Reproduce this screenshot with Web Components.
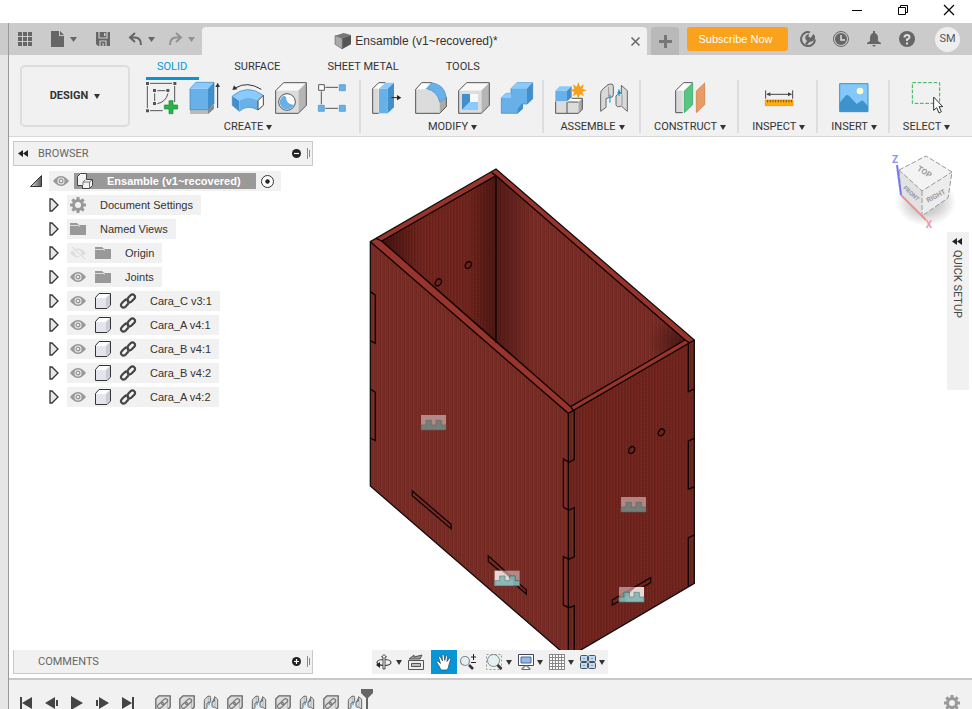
<!DOCTYPE html>
<html lang="en">
<head>
<meta charset="utf-8">
<meta name="viewport" content="width=device-width, initial-scale=1">
<title>Ensamble</title>
<style>
    html, body{
        height: 100%;
        margin: 0;
    }

    body{
        --ui: Roboto, sans-serif;
        --doc: "Liberation Sans", Arial, sans-serif;
        --panel: #f1f1f1;
        --line: #c8c8c8;
        --accent: #0696d7;
        background: #fff;
        color: #333;
        font: 11px/16px var(--ui);
        overflow: hidden;
    }
</style>
</head>
<body>
<cad-app></cad-app>

<script>
const cube = `
    <path d="M2 26 26 2H94L70 26z" fill="#f8f8f8"/>
    <path d="M70 26 94 2V70L70 94z" fill="#b5b5b5"/>
    <path d="M2 26H70V94H2z" fill="#dcdcdc"/>
    <path d="M2 26 26 2H94V70L70 94H2z" fill="none" stroke="#555" stroke-width="3" stroke-linejoin="round"/>`;

const gearTeeth = (n, cx, cy, r, w) => Array.from({ length: n }, (_, i) =>
    `<rect x="${cx - w / 2}" y="${cy - r}" width="${w}" height="${r}" transform="rotate(${i * 360 / n} ${cx} ${cy})"/>`
).join('');

const joint = (stroke) => `
    <g fill="#d9d9d9" stroke="#666" stroke-width="${stroke}" stroke-linejoin="round">
        <path d="M8 88V34Q8 26 16 20L30 8Q46 2 46 14V38Q46 48 34 46L24 50V76z"/>
        <path d="M54 42Q66 28 70 36V10L88 26V88L70 72Q56 78 54 68z"/>
    </g>
    <path d="M32 14V44M72 38V70" stroke="#999" stroke-width="3"/>
    <path d="M36 38V62M63 22V42" stroke="#0696d7" stroke-width="${stroke}"/>
    <path d="M57 34H69L63 24z" fill="#0696d7"/>`;

// name: [width, height, viewBox, markup]
const icons = {
    caret: [7, 5, '0 0 7 5', '<path d="M0 0H7L3.5 5z" fill="currentColor"/>'],
    tick: [6, 5, '0 0 6 5', '<path d="M0 0H6L3 5z" fill="currentColor"/>'],
    minimize: [10, 10, '0 0 10 10', '<path d="M0 5.5H10" stroke="#000"/>'],
    restore: [10, 10, '0 0 10 10', '<path d="M.5 2.5H7.5V9.5H.5zM2.5 2V.5H9.5V7.5H8" fill="none" stroke="#000"/>'],
    close: [10, 10, '0 0 10 10', '<path d="M0 0 10 10M10 0 0 10" stroke="currentColor" stroke-width="1.2"/>'],
    dismiss: [9, 9, '0 0 9 9', '<path d="M.5 .5 8.5 8.5M8.5 .5 .5 8.5" stroke="currentColor" stroke-width="1.5"/>'],
    apps: [14, 14, '0 0 14 14', '<path d="M0 0h4v4H0zM5 0h4v4H5zM10 0h4v4h-4zM0 5h4v4H0zM5 5h4v4H5zM10 5h4v4h-4zM0 10h4v4H0zM5 10h4v4H5zM10 10h4v4h-4z" fill="currentColor"/>'],
    file: [13, 16, '0 0 13 16', '<path d="M0 0H8V5H13V16H0zM9 0 13 4H9z" fill="currentColor"/>'],
    save: [14, 14, '0 0 14 14', '<path d="M0 0H14V14H2L0 12z" fill="currentColor"/><path d="M3 0V6H11V0M4 14V9H10V14M7 11V14" fill="none" stroke="#cbcbcb" stroke-width="1.2"/><path d="M8 1h1.5v3H8z" fill="#cbcbcb"/>'],
    undo: [13, 12, '0 0 13 12', '<path d="M6 0 1 4.5 6 9M1 4.5H6Q12 4.5 12 12" fill="none" stroke="currentColor" stroke-width="2"/>'],
    redo: [13, 12, '0 0 13 12', '<path d="M7 0 12 4.5 7 9M12 4.5H7Q1 4.5 1 12" fill="none" stroke="currentColor" stroke-width="2"/>'],
    doc: [16, 16, '0 0 48 48', '<path d="M0 8 26 0 48 6 22 16z" fill="#777"/><path d="M0 8 22 16V48L0 34z" fill="#aaa" stroke="#666" stroke-width="2"/><path d="M22 16 48 6V34L22 48z" fill="#555"/>'],
    plus: [13, 13, '0 0 13 13', '<path d="M6.5 0V13M0 6.5H13" stroke="#777" stroke-width="3"/>'],
    extensions: [16, 16, '0 0 16 16', '<path d="M10 1.4A7 7 0 1 0 15 8.5" fill="none" stroke="currentColor" stroke-width="2"/><path d="M5 13 7 10Q4 7 6 4.5L9 2.5 8.5 5.5 10.5 7 13.5 3 15 5Q15.5 9 12 10.5L9.5 11 7 14z" fill="currentColor"/>'],
    clock: [16, 16, '0 0 16 16', '<circle cx="8" cy="8" r="7.500" fill="none" stroke="currentColor"/><circle cx="8" cy="8" r="6" fill="currentColor"/><path d="M8 4V9H12" fill="none" stroke="#ddd" stroke-width="1.5"/>'],
    bell: [16, 16, '0 0 16 16', '<path d="M7 0H9V2Q12 3 12 7V10L15 12V13H1V12L4 10V7Q4 3 7 2zM6 14H10L8 16z" fill="currentColor"/>'],
    help: [16, 16, '0 0 16 16', '<circle cx="8" cy="8" r="8" fill="currentColor"/><path d="M5.5 6.5Q5.5 4 8 4T10.5 6.2Q10.500 7.500 8 8.5V10" fill="none" stroke="#ddd" stroke-width="2"/><path d="M7 11.5h2v2H7z" fill="#ddd"/>'],

    sketch: [32, 32, '0 0 96 96', `
        <path d="M12 4H78M4 12V78M86 12V60M12 86H50M34 26H58M26 34V57M66 34Q60 60 34 65" fill="none" stroke="#555" stroke-width="3"/>
        <path d="M0 0h9v9H0zM82 0h9v9H82zM0 82h9v9H0zM21 21h9v9H21zM61 21h9v9H61zM21 60h9v9H21z" fill="#555"/>
        <path d="M69 56H81V69H95V81H81V95H69V81H55V69H69z" fill="#2bb24c" stroke="#168c36" stroke-width="2"/>`],
    extrude: [32, 32, '0 0 96 96', `
        <path d="M3 80H57L75 68V80L57 96H3z" fill="#bbb"/>
        <path d="M57 84 75 68V80L57 96z" fill="#888"/>
        <path d="M3 20H57V83H3z" fill="#68b1e8"/><path d="M3 20 21 1H75L57 20z" fill="#8acbff"/><path d="M57 20 75 1V65L57 83z" fill="#438fcb"/>
        <path d="M3 20 21 1H75V65L57 83H3z" fill="none" stroke="#3e83b7" stroke-width="2"/>
        <path d="M86 14V78" stroke="#333" stroke-width="3"/><path d="M79 15H93L86 2z" fill="#333"/>`],
    revolve: [32, 32, '0 0 96 96', `
        <path d="M1 42 22 56V88L1 70z" fill="#438fcb"/>
        <path d="M1 42Q46 4 94 40L78 56Q46 38 22 56z" fill="#8acbff"/>
        <path d="M22 56Q46 38 78 56V84Q46 66 22 88z" fill="#68b1e8"/>
        <path d="M1 42Q46 4 94 40M1 42V70L22 88Q46 66 78 84" fill="none" stroke="#3e83b7" stroke-width="2"/>
        <path d="M78 56 94 40V70L78 84z" fill="#fff" stroke="#444" stroke-width="3"/>
        <path d="M10 18Q46-4 88 22" fill="none" stroke="#333" stroke-width="3"/><path d="M1 24 6 10 16 22z" fill="#333"/>`],
    hole: [32, 32, '0 0 96 96', cube + `
        <circle cx="36" cy="60" r="25" fill="#fff" stroke="#555" stroke-width="3"/>
        <path d="M26 41A22 22 0 1 0 57 68Q35 66 34 50Q34 42 26 41z" fill="#68b1e8"/>`],
    pattern: [32, 32, '0 0 96 96', `
        <path d="M22 16H60M22 79H60M10 28V67" stroke="#555" stroke-width="3"/>
        <path d="M2 8h17v17H2z" fill="#fff" stroke="#555" stroke-width="3"/>
        <path d="M64 8h18v18H64zM1 70h18v18H1zM64 70h18v18H64z" fill="#68b1e8" stroke="#438fcb" stroke-width="2"/>`],
    press: [32, 32, '0 0 96 96', `
        <path d="M2 20 20 2H66V20L40 94H2z" fill="#fafafa"/>
        <path d="M2 20H20V94H2z" fill="#d9d9d9"/><path d="M40 2H20L2 20V94H20" fill="none" stroke="#555" stroke-width="3"/>
        <path d="M21 20H47V94H21z" fill="#68b1e8"/><path d="M21 20 40 2H66L47 20z" fill="#8acbff"/><path d="M47 20 66 2V76L47 94z" fill="#438fcb"/>
        <path d="M58 47H78" stroke="#222" stroke-width="3"/><path d="M75 39V55L88 47z" fill="#222"/>`],
    fillet: [32, 32, '0 0 96 96', `
        <path d="M2 22 20 2H50L30 22z" fill="#fff"/>
        <path d="M2 22H32Q66 24 74 60V94H2z" fill="#dcdcdc"/>
        <path d="M74 60 94 48V74L74 94z" fill="#aaa"/>
        <path d="M50 2H20L2 22V94H74L94 74V46" fill="none" stroke="#555" stroke-width="3"/>
        <path d="M34 20 50 2Q90 8 94 48L74 60Q68 28 34 20z" fill="#68b1e8" stroke="#438fcb" stroke-width="2"/>`],
    shell: [32, 32, '0 0 96 96', cube + `
        <path d="M12 36H60V84H12z" fill="#f8f8f8"/>
        <path d="M12 36H36V60L12 84z" fill="#438fcb"/><path d="M36 60H60V84H12z" fill="#8acbff"/>`],
    combine: [32, 32, '0 0 96 96', `
        <path d="M1 48 15 34H30V20L48 2H95V50L79 66H64V80L50 94H1z" fill="#68b1e8" stroke="#3e83b7" stroke-width="2"/>
        <path d="M1 48 15 34H30V48zM30 20 48 2H95L78 20z" fill="#8acbff"/>
        <path d="M78 20 95 2V50L78 66zM62 66H66V80L50 94V80z" fill="#438fcb"/>`],
    component: [32, 32, '0 0 96 96', `
        <path d="M36 60 48 49H82L70 60z" fill="#fff"/><path d="M70 60 82 49V82L70 94z" fill="#aaa"/>
        <path d="M2 60H70V94H2z" fill="#dcdcdc"/>
        <path d="M2 58V94H70L82 82V49H50M36 60V94M38 60H70" fill="none" stroke="#555" stroke-width="3"/>
        <path d="M1 26H36V58H1z" fill="#68b1e8"/><path d="M1 26 14 13H50L36 26z" fill="#8acbff"/><path d="M36 26 50 13V46L36 58z" fill="#438fcb"/>
        <path d="M70 0 75 14 87 7 82 20 95 25 82 30 87 43 75 37 70 50 65 37 53 43 58 30 45 25 58 20 53 7 65 14z" fill="#f7a11a"/>`],
    joint: [32, 32, '0 0 96 96', joint(3)],
    construct: [32, 32, '0 0 96 96', `
        <path d="M5 26 29 2H56L30 26z" fill="#fff"/><path d="M5 26H26V92H5z" fill="#d9d9d9"/>
        <path d="M56 2H29L5 26V92H26" fill="none" stroke="#555" stroke-width="3"/>
        <path d="M31 27 56 3V68L31 92z" fill="#58c583" stroke="#249f55" stroke-width="2"/>
        <path d="M67 27 92 3V68L67 92z" fill="#e99b66" stroke="#c9733b" stroke-width="2"/>`],
    measure: [32, 32, '0 0 96 96', `
        <path d="M8 25V50M89 25V50M12 37H85" stroke="#444" stroke-width="3"/>
        <path d="M10 37 22 31V43zM87 37 75 31V43z" fill="#444"/>
        <path d="M7 54H90V71H7z" fill="#ffab12" stroke="#e29000" stroke-width="2"/>
        <path d="M14 54V61M22 54V61M30 54V61M38 54V61M46 54V61M54 54V61M62 54V61M70 54V61M78 54V61M85 54V61" stroke="#755000" stroke-width="3"/>`],
    picture: [32, 32, '0 0 96 96', `
        <path d="M5 5H90V89H5z" fill="#82c8fb"/><path d="M5 62 24 40Q28 38 33 41L56 66 70 56Q74 55 78 59L90 73V89H5z" fill="#3e93cc"/>
        <circle cx="66" cy="27" r="10" fill="#fffcd0"/><path d="M5 5H90V89H5z" fill="none" stroke="#3e93cc" stroke-width="3"/>`],
    select: [32, 32, '0 0 96 96', `
        <path d="M4 2H86V64H4z" fill="none" stroke="#29b555" stroke-width="3" stroke-dasharray="11 5"/>
        <path d="M68 45V85L77 77 84 93 91 89 84 74H95z" fill="#fff" stroke="#333" stroke-width="3"/>`],

    rewind: [10, 7, '0 0 10 7', '<path d="M5 0V7L0 3.5zM10 0V7L5 3.5z" fill="#222"/>'],
    collapse: [9, 9, '0 0 9 9', '<circle cx="4.5" cy="4.5" r="4.5" fill="#222"/><path d="M2 4.5H7" stroke="#fff" stroke-width="1.2"/>'],
    expand: [9, 9, '0 0 9 9', '<circle cx="4.5" cy="4.5" r="4.5" fill="#222"/><path d="M2 4.5H7M4.5 2V7" stroke="#fff" stroke-width="1.2"/>'],
    grip: [3, 11, '0 0 3 11', '<path d="M.5 0V11M2.5 2V9" stroke="#888"/>'],
    open: [12, 12, '0 0 12 12', '<defs><linearGradient id="o"><stop stop-color="#ddd"/><stop offset="1" stop-color="#555"/></linearGradient></defs><path d="M11.500 .5V11.5H.5z" fill="url(#o)" stroke="#333"/>'],
    closed: [10, 14, '0 0 10 14', '<path d="M1 1H3L9 7 3 13H1z" fill="#e8e8e8" stroke="#333" stroke-width="1.3"/>'],
    eye: [16, 16, '0 0 16 16', '<path d="M0 8Q8-2 16 8Q8 18 0 8z" fill="#999"/><circle cx="8" cy="8" r="3.500" fill="#f1f1f1"/><circle cx="8" cy="8" r="2.500" fill="#999"/><path d="M7 7h2v2H7z" fill="#eee"/>'],
    hidden: [16, 16, '0 0 16 16', '<path d="M0 8Q8-1 16 8Q8 17 0 8z" fill="#ddd"/><circle cx="8" cy="8" r="3" fill="#f1f1f1"/><path d="M1 2 14 14" stroke="#f1f1f1" stroke-width="3"/><path d="M2 2 15 14" stroke="#d5d5d5"/>'],
    gear: [16, 16, '0 0 16 16', `<g fill="#999">${gearTeeth(8, 8, 8, 8, 3)}<circle cx="8" cy="8" r="6"/></g><circle cx="8" cy="8" r="3" fill="#f1f1f1"/>`],
    folder: [16, 16, '0 0 16 16', '<path d="M0 2H7L9 4H16V14H0z" fill="#999"/><path d="M0 4.5H8L10 5.5" fill="none" stroke="#ddd"/>'],
    body: [16, 16, '0 0 16 16', '<path d="M.5 4.5 4.5 .5H15.5V11.5L11.5 15.5H.5z" fill="#fff"/><path d="M1 5H11V15H1z" fill="#e4e5ec"/><path d="M11 5 15 1V11L11 15z" fill="#c9ccd6"/><path d="M.5 4.5 4 .5H15.5V12L12 15.5H.5z" fill="none" stroke="#333"/>'],
    assembly: [16, 16, '0 0 16 16', '<path d="M.5 3.5 3.5 .5H9.5V6.5H15.5V12.5L12.5 15.5H5.5V12.5H.5z" fill="#f3f3f6" stroke="#444"/><path d="M6 12V9L8.500 6.5M6 9H12.5V15M12.5 9 15 7" fill="none" stroke="#777"/>'],
    link: [16, 16, '0 0 16 16', '<g fill="none" stroke="#444" stroke-width="2.2" stroke-linecap="round"><path d="M8 5 10.5 2.3Q12.5 .5 14.3 2.2T13.8 6.2L11.5 8.5Q9.5 10.3 7.8 8.8"/><path d="M8 11 5.5 13.7Q3.5 15.5 1.7 13.8T2.2 9.8L4.5 7.5Q6.5 5.7 8.2 7.2"/></g>'],
    target: [13, 13, '0 0 13 13', '<circle cx="6.5" cy="6.5" r="6" fill="#fff" stroke="#333"/><circle cx="6.5" cy="6.5" r="2.2" fill="#222"/>'],

    orbit: [16, 16, '0 0 16 16', '<ellipse cx="8" cy="8.5" rx="7" ry="3" fill="none" stroke="#444" stroke-width="1.2"/><path d="M7 15V3H5.5L8 .5 10.5 3H9V15z" fill="#fff" stroke="#444"/><path d="M4 8V14L0 11z" fill="#222"/>'],
    look: [16, 16, '0 0 16 16', '<path d="M1 5 6 1V3L14 1 12 5z" fill="#999" stroke="#555"/><path d="M.5 6.5H15.5V15.5H.5z" fill="#eee" stroke="#555"/><path d="M3.5 9.5H12.5V12.5H3.5z" fill="#b8c0d0" stroke="#555"/>'],
    pan: [16, 16, '0 0 16 16', '<path d="M5 16Q4 13 1 9 0 7 2 7L4.5 9.5 2.5 3Q3 1.5 4.5 3L6.5 7 6 1Q7-.5 8 1L8.8 6.5 10 1.5Q11 .5 11.5 2L11 7.5 13.5 4Q15 3.5 14.8 5L13 10.5Q12.5 14 11 16z" fill="#fff" stroke="#234" stroke-width=".6"/>'],
    zoom: [16, 16, '0 0 16 16', '<circle cx="5" cy="7" r="4.5" fill="#e4f1f3" stroke="#888" stroke-width="1.2"/><path d="M9 11 13 15" stroke="#333" stroke-width="2.5"/><path d="M13.5 0V6M11 3H16M11 8.5H16" stroke="#222"/>'],
    fit: [16, 16, '0 0 16 16', '<path d="M.5 .5H15.5V15.5H.5z" fill="none" stroke="#999" stroke-dasharray="2 2"/><circle cx="7.5" cy="6.5" r="6" fill="#e4f1f3" stroke="#888"/><path d="M11.5 11 15.5 15" stroke="#333" stroke-width="2.5"/>'],
    display: [16, 16, '0 0 16 16', '<path d="M.5 .5H15.5V11.5H.5z" fill="#fff" stroke="#445"/><path d="M3 3H13V9H3z" fill="#98b8e4" stroke="#456ba4"/><path d="M6 12H10V14H12V15.5H4V14H6z" fill="#fff" stroke="#667"/>'],
    grid: [16, 16, '0 0 16 16', '<path d="M.5 .5H15.5V15.5H.5z" fill="#fff"/><path d="M.5 0V16M3.5 0V16M6.5 0V16M9.5 0V16M12.5 0V16M15.5 0V16M0 .5H16M0 3.5H16M0 6.5H16M0 9.5H16M0 12.5H16M0 15.5H16" stroke="#888"/>'],
    views: [16, 14, '0 0 16 14', '<g fill="#c4d8f0" stroke="#456"><rect x=".5" y=".5" width="7" height="6" rx="1"/><rect x="8.5" y=".5" width="7" height="6" rx="1"/><rect x=".5" y="7.5" width="7" height="6" rx="1"/><rect x="8.5" y="7.5" width="7" height="6" rx="1"/></g><path d="M3 3H5V4H3zM11 3H13V4H11zM3 10H5V11H3zM11 10H13V11H11z" fill="#7ba0d0"/>'],

    first: [12, 12, '0 0 12 12', '<path d="M0 0H2V12H0zM12 0V12L2 6z" fill="#444"/>'],
    prev: [13, 12, '0 0 13 12', '<path d="M10 0V12L0 6zM11 3H13V9H11z" fill="#444"/>'],
    play: [12, 14, '0 0 12 14', '<path d="M0 0V14L12 7z" fill="#444"/>'],
    next: [13, 12, '0 0 13 12', '<path d="M3 0V12L13 6zM0 3H2V9H0z" fill="#444"/>'],
    last: [12, 12, '0 0 12 12', '<path d="M10 0H12V12H10zM0 0V12L10 6z" fill="#444"/>'],
    insert: [16, 16, '0 0 16 16', '<path d="M.8 4 4 .8H15.2V12L12 15.2H.8z" fill="#dcdcdc" stroke="#666" stroke-width="1.3"/><path d="M12.500 4V14" stroke="#bbb"/><g fill="none" stroke="#777" stroke-width="1.2"><rect x="2" y="8" width="7" height="4" rx="2" transform="rotate(-40 6 10)"/><rect x="6" y="5" width="7" height="4" rx="2" transform="rotate(-40 9 7)"/></g>'],
    link2: [16, 16, '0 0 96 96', joint(6)],
    marker: [12, 24, '0 0 12 24', '<path d="M0 0H12V4L7 9V24H5V9L0 4z" fill="#666"/>']
};

function component(tag, css, html = '', setup){
    let template = document.createElement('template');
    template.innerHTML = `<style>${css}</style>${html}`;

    customElements.define(tag, class extends HTMLElement{
        constructor(){
            super();
            this.attachShadow({ mode: 'open' });
            this.shadowRoot.append(template.content.cloneNode(true));
        };

        connectedCallback(){
            if(setup) setup(this, this.shadowRoot);
        };
    });
};

// shared reset for native buttons inside the shadow roots
const buttonReset = `
    button{
        display: flex;
        align-items: center;
        justify-content: center;
        margin: 0;
        padding: 0;
        border: 0;
        background: none;
        color: inherit;
        font: inherit;
        white-space: nowrap;
    }`;

component('ui-icon', `
    :host{ display: inline-flex; flex: none; }
    svg{ display: block; overflow: visible; }
`, '', (el, root) => {
    let [w, h, box, markup] = icons[el.getAttribute('name')];
    root.innerHTML += `<svg width="${w}" height="${h}" viewBox="${box}" aria-hidden="true">${markup}</svg>`;
});

component('window-controls', `
    :host{
        display: flex;
        justify-content: flex-end;
        height: 23px;
        background: #fff;
        color: #000;
    }
    ${buttonReset}
    button{ width: 46px; height: 20px; }
`, `
    <button aria-label="Minimize"><ui-icon name="minimize"></ui-icon></button>
    <button aria-label="Restore"><ui-icon name="restore"></ui-icon></button>
    <button aria-label="Close"><ui-icon name="close"></ui-icon></button>
`);

component('app-bar', `
    :host{
        display: flex;
        align-items: center;
        height: 32px;
        padding: 0 12px 0 9px;
        background: #cbcbcb;
        color: #666;
        font-family: var(--doc);
    }
    ${buttonReset}
    .quick{ display: flex; gap: 19px; margin-right: 14px; }
    .drop{ gap: 6px; }
    .faded{ color: #929292; margin-right: 7px; }
    .tab{
        display: flex;
        flex: 1;
        align-self: flex-end;
        align-items: center;
        height: 28px;
        padding: 0 7px 0 0;
        border-radius: 4px 4px 0 0;
        background: var(--panel);
    }
    .title{
        display: flex;
        flex: 1;
        align-items: center;
        justify-content: center;
        gap: 4px;
        color: #333;
        font-size: 12px;
        white-space: nowrap;
    }
    .new{
        align-self: flex-end;
        width: 28px;
        height: 28px;
        margin: 0 8px 0 4px;
        border-radius: 4px 4px 0 0;
        background: #b9b9b9;
    }
    .subscribe{
        width: 101px;
        height: 24px;
        padding-right: 4px;
        border-radius: 3px;
        background: #faa21b;
        color: #fff;
    }
    .status{ display: flex; gap: 17px; margin: 0 20px 0 12px; }
    .avatar{
        width: 25px;
        height: 25px;
        border-radius: 50%;
        background: #eee;
        color: #555;
        font-family: var(--ui);
    }
`, `
    <div class="quick">
        <button aria-label="Data panel"><ui-icon name="apps"></ui-icon></button>
        <button class="drop" aria-label="File"><ui-icon name="file"></ui-icon><ui-icon name="caret"></ui-icon></button>
        <button aria-label="Save"><ui-icon name="save"></ui-icon></button>
        <button class="drop" aria-label="Undo"><ui-icon name="undo"></ui-icon><ui-icon name="caret"></ui-icon></button>
    </div>
    <button class="drop faded" aria-label="Redo"><ui-icon name="redo"></ui-icon><ui-icon name="caret"></ui-icon></button>
    <div class="tab">
        <div class="title"><ui-icon name="doc"></ui-icon><slot></slot></div>
        <button aria-label="Close document"><ui-icon name="dismiss"></ui-icon></button>
    </div>
    <button class="new" aria-label="New design"><ui-icon name="plus"></ui-icon></button>
    <button class="subscribe">Subscribe Now</button>
    <div class="status">
        <button aria-label="Extensions"><ui-icon name="extensions"></ui-icon></button>
        <button aria-label="Job status"><ui-icon name="clock"></ui-icon></button>
        <button aria-label="Notifications"><ui-icon name="bell"></ui-icon></button>
        <button aria-label="Help"><ui-icon name="help"></ui-icon></button>
    </div>
    <button class="avatar">SM</button>
`);

component('tool-group', `
    :host{
        display: flex;
        flex-direction: column;
        align-items: center;
        gap: 5px;
        padding: 2px 11px 0 13px;
        border-right: 2px solid #ddd;
    }
    :host([wide]){ padding: 2px 9px 0 11px; }
    :host(:first-child){ padding-left: 0; }
    :host(:last-child){ border: 0; }
    ${buttonReset}
    .tools{ display: flex; gap: 11px; }
    .label{ gap: 3px; height: 16px; }
`, `
    <div class="tools"></div>
    <button class="label"><slot></slot><ui-icon name="tick"></ui-icon></button>
`, (el, root) => {
    root.querySelector('.tools').innerHTML = el.getAttribute('tools').split(' ').map(name =>
        `<button aria-label="${name}"><ui-icon name="${name}"></ui-icon></button>`
    ).join('');
});

component('tool-ribbon', `
    :host{
        display: flex;
        gap: 16px;
        height: 81px;
        padding-left: 11px;
        border-bottom: 1px solid #d8d8d8;
        background: var(--panel);
        overflow: hidden;
    }
    ${buttonReset}
    .workspace{
        flex: none;
        gap: 6px;
        width: 110px;
        height: 62px;
        margin-top: 10px;
        border: 2px solid #ddd;
        border-radius: 5px;
        font-weight: 700;
    }
    .tabs{ display: flex; gap: 24px; height: 25px; }
    .tabs button{
        height: 25px;
        padding: 2px 12px 0 11px;
        box-sizing: border-box;
        border-bottom: 3px solid transparent;
    }
    .tabs .active{ border-color: var(--accent); color: var(--accent); }
    .groups{ display: flex; height: 53px; }
`, `
    <button class="workspace">DESIGN <ui-icon name="tick"></ui-icon></button>
    <div>
        <nav class="tabs">
            <button class="active">SOLID</button>
            <button>SURFACE</button>
            <button>SHEET METAL</button>
            <button>TOOLS</button>
        </nav>
        <div class="groups">
            <tool-group wide tools="sketch extrude revolve hole pattern">CREATE</tool-group>
            <tool-group wide tools="press fillet shell combine">MODIFY</tool-group>
            <tool-group wide tools="component joint">ASSEMBLE</tool-group>
            <tool-group tools="construct">CONSTRUCT</tool-group>
            <tool-group tools="measure">INSPECT</tool-group>
            <tool-group tools="picture">INSERT</tool-group>
            <tool-group tools="select">SELECT</tool-group>
        </div>
    </div>
`);

component('dock-panel', `
    :host{
        display: flex;
        align-items: center;
        gap: 6px;
        box-sizing: border-box;
        width: 300px;
        height: 25px;
        padding: 0 2px 0 4px;
        border: 1px solid var(--line);
        background: var(--panel);
        color: #666;
    }
    :host([docked]){ height: 24px; border-top: 0; }
    .lead{ width: 10px; display: flex; }
    .name{ flex: 1; padding-left: 4px; }
    ${buttonReset}
`, `
    <span class="lead"><slot name="lead"></slot></span>
    <span class="name"><slot></slot></span>
    <button aria-label="Toggle panel"><slot name="toggle"></slot></button>
    <ui-icon name="grip"></ui-icon>
`);

component('tree-item', `
    :host{
        display: flex;
        align-items: center;
        gap: 8px;
        height: 24px;
        padding-left: 36px;
        font-family: var(--doc);
    }
    :host([root]){ gap: 7px; padding-left: 17px; }
    .chip{
        display: flex;
        align-items: center;
        height: 20px;
        padding: 0 8px 0 3px;
        background: var(--panel);
        white-space: nowrap;
    }
    .text{ padding-left: 5px; }
    :host([root]) .chip{ gap: 5px; padding: 0 7px 0 4px; }
    .node{ display: flex; align-items: center; gap: 9px; }
    :host([root]) .node{
        height: 16px;
        padding: 0 15px 0 3px;
        background: #999;
        color: #fff;
        font-weight: 700;
    }
    ${buttonReset}
`, `
    <button aria-label="Expand"></button>
    <div class="chip"></div>
`, (el, root) => {
    let isRoot = el.hasAttribute('root');
    let list = el.getAttribute('icons').split(' ').map(name => `<ui-icon name="${name}"></ui-icon>`);
    let eye = isRoot ? list.shift() : '';
    root.querySelector('button').innerHTML = `<ui-icon name="${isRoot ? 'open' : 'closed'}"></ui-icon>`;
    root.querySelector('.chip').innerHTML =
        `${eye}<div class="node">${list.join('')}<span class="text"><slot></slot></span></div>` +
        (isRoot ? '<ui-icon name="target"></ui-icon>' : '');
});

component('browser-tree', `
    :host{ display: block; }
    div{ padding-top: 3px; }
`, `
    <dock-panel>BROWSER<ui-icon slot="lead" name="rewind"></ui-icon><ui-icon slot="toggle" name="collapse"></ui-icon></dock-panel>
    <div>
        <tree-item root icons="eye assembly">Ensamble (v1~recovered)</tree-item>
        <tree-item icons="gear">Document Settings</tree-item>
        <tree-item icons="folder">Named Views</tree-item>
        <tree-item icons="hidden folder">Origin</tree-item>
        <tree-item icons="eye folder">Joints</tree-item>
        <tree-item icons="eye body link">Cara_C v3:1</tree-item>
        <tree-item icons="eye body link">Cara_A v4:1</tree-item>
        <tree-item icons="eye body link">Cara_B v4:1</tree-item>
        <tree-item icons="eye body link">Cara_B v4:2</tree-item>
        <tree-item icons="eye body link">Cara_A v4:2</tree-item>
    </div>
`);

// joint glyph pinned on the model; bright covers the part that is not occluded
const pin = (x, y, bright = '') => `
    <g transform="translate(${x} ${y})">
        <path d="M0 0H75V45H0z" fill="#d9c4c2" opacity=".62"/>
        <path d="M0 30H15V16H31V30H45V16H61V30H75V45H0z" fill="#6f7d78" stroke="#5b6562" stroke-width="2" opacity=".9"/>
        ${bright && `<path d="${bright}" fill="#f4eceb" opacity=".8"/>
        <path d="M0 30H15V16H31V30H45V16H61V30H75V45H0z" fill="#7fb5b3" stroke="#45706e" stroke-width="2" opacity=".85"/>`}
    </g>`;

component('box-model', `
    :host{ display: block; }
    svg{ display: block; }
`, `
    <svg width="340" height="490" viewBox="0 0 1020 1470" role="img" aria-label="Box">
        <defs>
            <pattern id="weave" width="12" height="6" patternUnits="userSpaceOnUse">
                <path d="M1.5 0V6M7.5 0V3M10.5 3V6" stroke="#3b0d0a" stroke-width="3" opacity=".16"/>
                <path d="M4.5 0V3" stroke="#a8443c" stroke-width="3" opacity=".16"/>
            </pattern>
            <pattern id="cross" width="9" height="6" patternUnits="userSpaceOnUse" patternTransform="skewY(-30)">
                <path d="M0 1.5H9M1.5 0V6" stroke="#330806" stroke-width="3" opacity=".2"/>
                <path d="M6 4.5h3" stroke="#b04840" stroke-width="3" opacity=".25"/>
            </pattern>
            <linearGradient id="back"><stop stop-color="#200504" stop-opacity=".6"/><stop offset=".35" stop-color="#200504" stop-opacity="0"/><stop offset=".75" stop-color="#200504" stop-opacity="0"/><stop offset="1" stop-color="#200504" stop-opacity=".45"/></linearGradient>
            <linearGradient id="side"><stop stop-color="#200504" stop-opacity=".45"/><stop offset=".2" stop-color="#200504" stop-opacity="0"/></linearGradient>
            <radialGradient id="nook" gradientUnits="userSpaceOnUse" cx="960" cy="545" r="95"><stop stop-color="#200504" stop-opacity=".5"/><stop offset="1" stop-color="#200504" stop-opacity="0"/></radialGradient>
        </defs>
        <path d="M31 245 408 27 1003 540V1270L625 1492 31 978z" fill="#98342c"/>
        <path d="M65 243 408 47V548z" fill="#74261f"/><path d="M65 243 408 47V548z" fill="url(#cross)"/><path d="M65 243 408 47V548z" fill="url(#back)"/>
        <path d="M408 47 975 540 632 740 408 548z" fill="#7e2c26"/><path d="M408 47 975 540 632 740 408 548z" fill="url(#weave)"/><path d="M408 47 975 540 632 740 408 548z" fill="url(#side)"/><path d="M408 47 975 540 632 740 408 548z" fill="url(#nook)"/>
        <path d="M31 245 625 760V1492L31 978z" fill="#7e2c26"/><path d="M31 245 625 760V1492L31 978z" fill="url(#weave)"/>
        <path d="M625 760 1003 540V1270L625 1492z" fill="#74261f"/><path d="M625 760 1003 540V1270L625 1492z" fill="url(#cross)"/>
        <path d="M31 245 408 27 1003 540V1270L625 1492 31 978z" fill="none" stroke="#111" stroke-width="4"/>
        <g fill="none" stroke="#110302" stroke-width="4">
            <path d="M31 245 625 760 1003 540M48 235 65 243M65 243 408 47 975 540 632 740zM395 38 408 47V548M625 760V1492M632 740 640 752M975 540 988 548"/>
            <path d="M643 750V898L627 907 610 897V1042L627 1050 643 1043V1190L627 1198 610 1190V1335L627 1343 643 1337V1480"/>
            <path d="M31 395 46 405V550L31 542M31 687 46 697V842L31 834"/>
            <path d="M985 550V695L1003 687M1003 835 985 843V988L1003 980M1003 1125 985 1133V1278"/>
            <path d="M157 993 273 1093V1106L157 1007zM385 1188 499 1290V1302L385 1204zM757 1320 872 1253V1268L757 1335z"/>
            <ellipse cx="325" cy="315" rx="8" ry="11" transform="rotate(35 325 315)"/>
            <ellipse cx="235" cy="367" rx="8" ry="11" transform="rotate(35 235 367)"/>
            <ellipse cx="904" cy="817" rx="8" ry="11" transform="rotate(35 904 817)"/>
            <ellipse cx="815" cy="870" rx="8" ry="11" transform="rotate(35 815 870)"/>
        </g>
        ${pin(183, 765)}
        ${pin(783, 1011)}
        ${pin(404, 1232, 'M0 0H20L55 30V45H0z')}
        ${pin(777, 1281, 'M75 0H50L20 30V45H75z')}
    </svg>
`);

component('view-cube', `
    :host{ display: block; }
    svg{ display: block; overflow: visible; }
    text{ font: 700 8px var(--ui); fill: #999; text-anchor: middle; }
    .axis{ font-size: 10px; }
`, `
    <svg width="66" height="80" viewBox="0 0 66 80">
        <defs>
            <radialGradient id="shade"><stop offset=".5" stop-color="#999" stop-opacity=".45"/><stop offset="1" stop-color="#999" stop-opacity="0"/></radialGradient>
        </defs>
        <ellipse cx="36" cy="50" rx="30" ry="24" fill="url(#shade)"/>
        <path d="M9 18 36 4 62 20 32 39z" fill="#f3f3f3"/>
        <path d="M9 18 32 39V64L11 43z" fill="#e2e2e2"/>
        <path d="M32 39 62 20 58 46 32 64z" fill="#ececec"/>
        <path d="M9 18 36 4 62 20 58 46 32 64 11 43zM9 18 32 39 62 20M32 39V64" fill="none" stroke="#999" stroke-dasharray="5 2"/>
        <path d="M7 13 11 43" stroke="#7777f0" stroke-width="2"/>
        <path d="M11 43 36 68" stroke="#f09090" stroke-width="2"/>
        <text transform="translate(33 22) rotate(32)">TOP</text>
        <text transform="translate(20 43) rotate(42)" style="font-size: 6px">FRONT</text>
        <text transform="translate(47 46) rotate(-28)" style="font-size: 7px">RIGHT</text>
        <text class="axis" x="5" y="11" style="fill: #9090f5">Z</text>
        <text class="axis" x="39" y="76" style="fill: #f29a9a">X</text>
    </svg>
`);

component('quick-setup', `
    :host{ display: block; }
    ${buttonReset}
    button{
        justify-content: flex-start;
        gap: 5px;
        width: 22px;
        height: 158px;
        padding: 6px 2px 0 0;
        background: var(--panel);
        writing-mode: vertical-rl;
        color: #444;
    }
`, `<button><ui-icon name="rewind"></ui-icon>QUICK SETUP</button>`);

component('model-view', `
    :host{
        display: flex;
        flex: 1;
        justify-content: space-between;
        min-height: 0;
        position: relative;
        padding: 4px 3px 0 4px;
        overflow: hidden;
        background: #fff;
    }
    browser-tree{ position: relative; }
    /* the model sits freely on the canvas, under the panels */
    box-model{ position: absolute; left: 351px; top: 23px; }
    .side{ display: flex; flex-direction: column; align-items: flex-end; position: relative; }
    view-cube{ margin: 11px 13px 0 0; }
`, `
    <box-model></box-model>
    <browser-tree></browser-tree>
    <div class="side">
        <view-cube></view-cube>
        <quick-setup></quick-setup>
    </div>
`);

component('nav-bar', `
    :host{
        display: flex;
        height: 24px;
        background: var(--panel);
        color: #333;
    }
    ${buttonReset}
    button{ gap: 3px; padding: 0 3px; }
    .roomy{ gap: 4px; padding-left: 4px; }
    .on{ width: 26px; margin: 0 0 0 4px; background: var(--accent); }
    .on + button{ margin-right: 3px; }
`, `
    <button class="roomy" aria-label="Orbit"><ui-icon name="orbit"></ui-icon><ui-icon name="tick"></ui-icon></button>
    <button aria-label="Look at"><ui-icon name="look"></ui-icon></button>
    <button class="on" aria-label="Pan"><ui-icon name="pan"></ui-icon></button>
    <button aria-label="Zoom"><ui-icon name="zoom"></ui-icon></button>
    <button class="roomy" aria-label="Fit"><ui-icon name="fit"></ui-icon><ui-icon name="tick"></ui-icon></button>
    <button aria-label="Display settings"><ui-icon name="display"></ui-icon><ui-icon name="tick"></ui-icon></button>
    <button aria-label="Grid and snaps"><ui-icon name="grid"></ui-icon><ui-icon name="tick"></ui-icon></button>
    <button aria-label="Viewports"><ui-icon name="views"></ui-icon><ui-icon name="tick"></ui-icon></button>
`);

component('time-line', `
    :host{
        display: flex;
        align-items: flex-start;
        height: 29px;
        padding: 0 12px 0 11px;
        border-top: 2px solid var(--line);
        background: var(--panel);
        overflow: hidden;
    }
    ${buttonReset}
    .controls, .steps{ display: flex; align-items: center; height: 46px; }
    .controls{ gap: 13px; margin-right: 21px; }
    .controls:last-child{ margin: 0; }
    .steps{ flex: 1; gap: 8px; }
    .marker{ align-self: flex-start; margin: 9px 0 0 -10px; }
`, `
    <div class="controls">
        <button aria-label="Start"><ui-icon name="first"></ui-icon></button>
        <button aria-label="Step back"><ui-icon name="prev"></ui-icon></button>
        <button aria-label="Play"><ui-icon name="play"></ui-icon></button>
        <button aria-label="Step forward"><ui-icon name="next"></ui-icon></button>
        <button aria-label="End"><ui-icon name="last"></ui-icon></button>
    </div>
    <div class="steps">
        ${'insert insert link2 insert link2 insert link2 insert link2'.split(' ').map(name =>
            `<button aria-label="${name}"><ui-icon name="${name}"></ui-icon></button>`
        ).join('')}
        <ui-icon class="marker" name="marker"></ui-icon>
    </div>
    <div class="controls"><button aria-label="Preferences"><ui-icon name="gear"></ui-icon></button></div>
`);

component('cad-app', `
    :host{ display: flex; flex-direction: column; height: 100vh; }
    .frame{ display: flex; flex: 1; min-height: 0; }
    .edge{
        width: 8px;
        flex: none;
        border-top: 32px solid #cbcbcb;
        box-sizing: border-box;
        background: #e6e6e6;
    }
    .main{
        display: flex;
        flex: 1;
        flex-direction: column;
        min-width: 0;
        border-left: 1px solid #999;
    }
    .dock{ display: flex; gap: 59px; height: 28px; padding-left: 4px; }
`, `
    <window-controls></window-controls>
    <div class="frame">
        <div class="edge"></div>
        <div class="main">
            <app-bar>Ensamble (v1~recovered)*</app-bar>
            <tool-ribbon></tool-ribbon>
            <model-view></model-view>
            <div class="dock">
                <dock-panel docked>COMMENTS<ui-icon slot="toggle" name="expand"></ui-icon></dock-panel>
                <nav-bar></nav-bar>
            </div>
            <time-line></time-line>
        </div>
    </div>
`);
</script>
</body>
</html>
